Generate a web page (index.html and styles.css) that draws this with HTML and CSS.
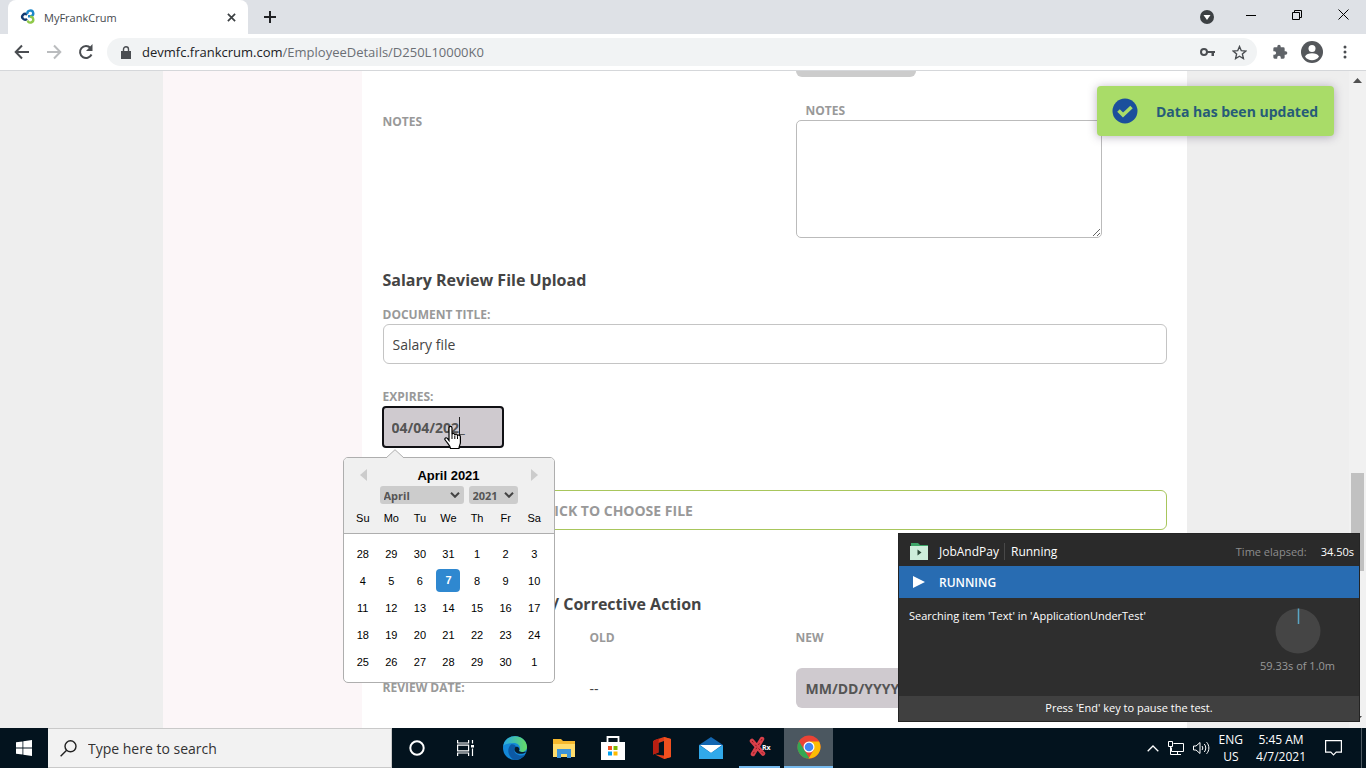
FILE: index.html
```html
<!DOCTYPE html>
<html lang="en">
<head>
<meta charset="utf-8">
<title>MyFrankCrum</title>
<link rel="stylesheet" href="styles.css">
</head>
<body>
<div class="screen">
  <header class="tabstrip">
    <div class="tab">
      <svg class="favicon" width="16" height="16" viewBox="0 0 16 16" fill="none" stroke-width="2.4"><path d="M7 5.800A2.800 2.800 0 1 0 7 9.800" stroke="#123a72"/><path d="M7.500 5A2.900 2.900 0 1 1 11 7.200H8" stroke="#1d87c9"/><path d="M10 7.800A2.900 2.900 0 1 1 7.600 11.500" stroke="#8fc94a"/></svg>
      <span class="tab-title">MyFrankCrum</span>
      <button class="icon-btn" aria-label="Close tab"><svg width="9" height="9" viewBox="0 0 10 10" stroke="#3c4043" stroke-width="1.900"><path d="M1 1l8 8M9 1l-8 8"/></svg></button>
    </div>
    <button class="icon-btn new-tab" aria-label="New tab"><svg width="12" height="12" viewBox="0 0 12 12" stroke="#202124" stroke-width="2"><path d="M6 0v12M0 6h12"/></svg></button>
    <button class="icon-btn update" aria-label="Search tabs"><svg width="14" height="14" viewBox="0 0 14 14"><circle cx="7" cy="7" r="7" fill="#3c4043"/><path d="M3.500 5h7L7 10z" fill="#fff"/></svg></button>
    <div class="window-controls">
      <button class="icon-btn" aria-label="Minimize"><svg width="10" height="10" viewBox="0 0 10 10" stroke="#000"><path d="M0 5.500h10"/></svg></button>
      <button class="icon-btn" aria-label="Restore"><svg width="10" height="10" viewBox="0 0 10 10" stroke="#000" fill="none"><path d="M.5 2.500h7v7h-7zM2.500 2.500v-2h7v7h-2"/></svg></button>
      <button class="icon-btn" aria-label="Close"><svg width="11" height="11" viewBox="0 0 11 11" stroke="#000"><path d="M.5.5l10 10M10.500.5l-10 10"/></svg></button>
    </div>
  </header>
  <nav class="toolbar">
    <button class="icon-btn nav-btn" aria-label="Back"><svg width="16" height="16" viewBox="0 0 16 16" fill="none" stroke="#4a4d51" stroke-width="2"><path d="M15 8H2M8 1.500L1.700 8 8 14.500"/></svg></button>
    <button class="icon-btn nav-btn" aria-label="Forward"><svg width="16" height="16" viewBox="0 0 16 16" fill="none" stroke="#babcbe" stroke-width="2"><path d="M1 8h13M8 1.500L14.300 8 8 14.500"/></svg></button>
    <button class="icon-btn nav-btn" aria-label="Reload"><svg width="16" height="16" viewBox="0 0 16 16" fill="none" stroke="#4a4d51" stroke-width="2"><path d="M13.500 10.500A6 6 0 1 1 12.500 4"/><path d="M14.500 0v7H8z" fill="#4a4d51" stroke="none"/></svg></button>
    <div class="omnibox">
      <svg width="10" height="13" viewBox="0 0 10 13"><path d="M0 5h10v8H0z" fill="#4a4d51"/><path d="M2.500 5V3.300a2.500 2.500 0 0 1 5 0V5" fill="none" stroke="#4a4d51" stroke-width="1.400"/></svg>
      <span class="url">devmfc.frankcrum.com<span class="path">/EmployeeDetails/D250L10000K0</span></span>
      <button class="icon-btn" aria-label="Passwords"><svg width="15" height="10" viewBox="0 0 15 10"><circle cx="4" cy="5" r="3" fill="none" stroke="#4a4d51" stroke-width="2"/><path d="M7 4h8v2h-1v3h-2.500V6H7z" fill="#4a4d51"/></svg></button>
      <button class="icon-btn" aria-label="Bookmark"><svg width="15" height="15" viewBox="0 0 15 15" fill="none" stroke="#4a4d51" stroke-width="1.400"><path d="M7.500 1.500l1.800 4.200 4.500.4-3.400 3 1 4.400-3.900-2.300-3.900 2.300 1-4.400-3.400-3 4.500-.4z"/></svg></button>
    </div>
    <button class="icon-btn ext" aria-label="Extensions"><svg width="16" height="16" viewBox="0 0 24 24" fill="#5f6368"><path d="M20.500 11H19V7a2 2 0 0 0-2-2h-4V3.500a2.500 2.500 0 0 0-5 0V5H4a2 2 0 0 0-2 2v3.800h1.500a2.700 2.700 0 0 1 0 5.400H2V20a2 2 0 0 0 2 2h3.800v-1.500a2.700 2.700 0 0 1 5.400 0V22H17a2 2 0 0 0 2-2v-4h1.500a2.500 2.500 0 0 0 0-5z"/></svg></button>
    <button class="icon-btn profile" aria-label="Profile"><svg width="22" height="22" viewBox="0 0 22 22"><circle cx="11" cy="11" r="11" fill="#54575b"/><circle cx="11" cy="7.500" r="3.500" fill="#fff"/><path d="M4 15.500c2-4.400 12-4.400 14 0-3 5-11 5-14 0z" fill="#fff"/></svg></button>
    <button class="icon-btn menu" aria-label="Menu"><svg width="4" height="14" viewBox="0 0 4 14" fill="#4a4d51"><circle cx="2" cy="2" r="1.500"/><circle cx="2" cy="7" r="1.500"/><circle cx="2" cy="12" r="1.500"/></svg></button>
  </nav>

  <div class="viewport">
    <div class="page">
      <div class="container">
        <aside class="sidebar"></aside>
        <main class="content">
          <div class="columns"><div class="date-stub"></div></div>
          <div class="columns notes-row">
            <span class="label notes-name">NOTES</span>
            <div class="notes-field">
              <label class="label notes-label" for="notes">NOTES</label>
              <textarea class="notes" id="notes"></textarea>
            </div>
          </div>
          <h2 class="heading">Salary Review File Upload</h2>
          <div class="field">
            <label class="label" for="doc">DOCUMENT TITLE:</label>
            <input class="text-input" id="doc" type="text" value="Salary file">
          </div>
          <div class="field expires">
            <label class="label" for="expires">EXPIRES:</label>
            <div class="date-wrap">
              <input class="date-input focused" id="expires" type="text" value="04/04/202_">
              <span class="caret"></span>
              <svg class="pointer" width="18" height="25" viewBox="0 0 18 25"><path d="M5 15.500V3c0-2.300 3-2.300 3 0v6.500c.4-1.500 2.700-1.300 2.800.4.5-1.200 2.600-1 2.700.7.600-1 2.900-.7 2.900 1.200v5.700c0 2-1.400 3-1.400 6H6.500c0-2.500-2.300-4.200-5.300-8.500-1-1.800.8-3 2.200-1.600z" fill="#fff" stroke="#000" stroke-width="1.200"/><path d="M8 9.500V14M10.800 10.500V14M13.500 11.500V14" stroke="#000"/></svg>
              <section class="calendar" aria-label="Choose date">
                <svg class="calendar-tip" width="18" height="9" viewBox="0 0 18 9"><path d="M0 9L9 .7 18 9" fill="#f0f0f0" stroke="#aeaeae"/></svg>
                <div class="calendar-head">
                  <div class="month-row">
                    <button class="icon-btn" aria-label="Previous month"><svg width="8" height="12" viewBox="0 0 8 12"><path d="M8 0v12L1 6z" fill="#ccc"/></svg></button>
                    <span class="month">April 2021</span>
                    <button class="icon-btn" aria-label="Next month"><svg width="8" height="12" viewBox="0 0 8 12"><path d="M0 0v12l7-6z" fill="#ccc"/></svg></button>
                  </div>
                  <div class="select-row">
                    <div class="select-wrap month-select"><select aria-label="Month"><option>April</option></select><svg width="10" height="6" viewBox="0 0 10 6" fill="none" stroke="#444" stroke-width="2"><path d="M1 .8l4 4 4-4"/></svg></div>
                    <div class="select-wrap year-select"><select aria-label="Year"><option>2021</option></select><svg width="10" height="6" viewBox="0 0 10 6" fill="none" stroke="#444" stroke-width="2"><path d="M1 .8l4 4 4-4"/></svg></div>
                  </div>
                  <div class="weekdays"><span>Su</span><span>Mo</span><span>Tu</span><span>We</span><span>Th</span><span>Fr</span><span>Sa</span></div>
                </div>
                <div class="calendar-body">
                  <table class="days">
                    <tr><td>28</td><td>29</td><td>30</td><td>31</td><td>1</td><td>2</td><td>3</td></tr>
                    <tr><td>4</td><td>5</td><td>6</td><td><span class="today">7</span></td><td>8</td><td>9</td><td>10</td></tr>
                    <tr><td>11</td><td>12</td><td>13</td><td>14</td><td>15</td><td>16</td><td>17</td></tr>
                    <tr><td>18</td><td>19</td><td>20</td><td>21</td><td>22</td><td>23</td><td>24</td></tr>
                    <tr><td>25</td><td>26</td><td>27</td><td>28</td><td>29</td><td>30</td><td>1</td></tr>
                  </table>
                </div>
              </section>
            </div>
          </div>
          <button class="choose-file">CLICK TO CHOOSE FILE</button>
          <h2 class="heading review-heading">/ Corrective Action</h2>
          <div class="columns names-row"><span class="label old-name">OLD</span><span class="label">NEW</span></div>
          <div class="columns review-row">
            <label class="label" for="review">REVIEW DATE:</label>
            <span class="old-value">--</span>
            <input class="date-input" id="review" type="text" placeholder="MM/DD/YYYY">
          </div>
        </main>
      </div>
      <div class="toast" role="status">
        <svg width="26" height="26" viewBox="0 0 26 26"><circle cx="13" cy="13" r="12.500" fill="#1b4f9c"/><path d="M6.500 12.500l4.500 4.500L19.500 9" fill="none" stroke="#a9dc68" stroke-width="3.600"/></svg>
        <span>Data has been updated</span>
      </div>
    </div>
    <div class="scrollbar">
      <svg width="9" height="5" viewBox="0 0 9 5"><path d="M0 5l4.500-5L9 5z" fill="#505050"/></svg>
      <div class="thumb"></div>
      <svg width="9" height="5" viewBox="0 0 9 5"><path d="M0 0l4.500 5L9 0z" fill="#505050"/></svg>
    </div>
  </div>

  <footer class="taskbar">
    <button class="task start" aria-label="Start"><svg width="16" height="16" viewBox="0 0 16 16" fill="#fff"><path d="M0 2.300L6.500 1.400v6.200H0zM7.300 1.300L16 0v7.600H7.300zM0 8.400h6.500v6.200L0 13.700zM7.300 8.400H16V16l-8.700-1.300z"/></svg></button>
    <label class="search">
      <svg width="17" height="17" viewBox="0 0 17 17" fill="none" stroke="#222" stroke-width="1.400"><circle cx="10.500" cy="6.300" r="5.500"/><path d="M6.600 10.200L.6 16.300"/></svg>
      <input type="text" placeholder="Type here to search">
    </label>
    <button class="task" aria-label="Cortana"><svg width="16" height="16" viewBox="0 0 16 16"><circle cx="8" cy="8" r="6.700" fill="none" stroke="#fff" stroke-width="2"/></svg></button>
    <button class="task" aria-label="Task view"><svg width="17" height="16" viewBox="0 0 17 16" fill="none" stroke="#fff" stroke-width="1.200"><path d="M.6 0v3h11V0M.6 16v-3h11V16M.6 5.100h11v5.800H.6zM15.500 0v3.500M15.500 8.500V16"/><path d="M14 5h3v2.500h-3z" fill="#fff" stroke="none"/></svg></button>
    <button class="task" aria-label="Edge"><svg width="24" height="24" viewBox="0 0 24 24"><defs><linearGradient id="edge-top" x1="0" x2="1"><stop offset="0" stop-color="#26a8e7"/><stop offset="1" stop-color="#66dc63"/></linearGradient></defs><circle cx="12" cy="12" r="12" fill="#1388d8"/><path d="M.2 10C2-3 23-3 24 11c0 5-6 6-8 4 3-4-1-8-5-8C6 7 2 8 .2 10z" fill="url(#edge-top)"/><path d="M8 8.500C4 12 4 20 11 24c5 0 9-2 11.300-5.500-5 2.500-11 0-11-4.500 0-2 1-2.800 1.700-3.500-1-1.500-3-2.500-5-2z" fill="#0c59a4"/><path d="M12.500 11c-2 2-.8 5.500 2.500 6.500 3 1 6-.2 8-1.300 1-1.200-4 1-7-1.200 1.200-2-.5-5-3.500-4z" fill="#071b2b"/></svg></button>
    <button class="task" aria-label="File Explorer"><svg width="22" height="19" viewBox="0 0 22 19"><path d="M0 0h8l2 2h12v16H0z" fill="#f5b82e"/><path d="M0 5h22v13H0z" fill="#ffdc6b"/><path d="M4 10h14v9h-4v-4H8v4H4z" fill="#3d94d9"/></svg></button>
    <button class="task" aria-label="Microsoft Store"><svg width="24" height="24" viewBox="0 0 24 24"><path d="M6.500 7V1h11v6" fill="none" stroke="#fff" stroke-width="1.800"/><path d="M0 6h24v18H0z" fill="#fff"/><path d="M7 10h4v4H7z" fill="#f15022"/><path d="M12.500 10h4v4h-4z" fill="#7fba00"/><path d="M7 15.500h4v4H7z" fill="#00a1f1"/><path d="M12.500 15.500h4v4h-4z" fill="#fb0"/></svg></button>
    <button class="task" aria-label="Office"><svg width="20" height="22" viewBox="0 0 20 22"><path d="M12 0l7 2v18l-7 2-9-4.500 9 1V4L6.500 6v9.500L1 17.500V6c0-2 .7-2.500 2-3z" fill="#e03c18"/><path d="M12 0l7 2v18l-7 2z" fill="#f0501f"/><path d="M3 3l4-1.500-.5 4.500v9.500L1 17.500V6c0-2 .7-2.500 2-3z" fill="#b81f12"/></svg></button>
    <button class="task" aria-label="Mail"><svg width="24" height="22" viewBox="0 0 24 22"><path d="M0 8l12-8 12 8v14H0z" fill="#1366b1"/><path d="M1 8h22l-11 8z" fill="#fff"/><path d="M0 8l12 8 12-8v14H0z" fill="#31a9ea"/></svg></button>
    <button class="task running" aria-label="Test runner"><svg width="24" height="24" viewBox="0 0 24 24"><path d="M4 6l11 12.500M14 4L5 19" stroke="#d8404a" stroke-width="4.500" stroke-linecap="round"/><path d="M4 6l11 12.500M14 4L5 19" stroke="#8b151c" stroke-width="1" stroke-dasharray="2 3"/><text x="14" y="15" class="rx">Rx</text></svg></button>
    <button class="task active" aria-label="Chrome"><svg width="24" height="24" viewBox="0 0 24 24"><circle cx="12" cy="12" r="11.500" fill="#ea4335"/><path d="M2 6.200l5.400 9 5.100 8.300A11.500 11.500 0 0 1 2 6.200z" fill="#34a853"/><path d="M12 6.500h10.100A11.500 11.500 0 0 1 11.500 23.500l5.300-8.800z" fill="#fbbc05"/><circle cx="12" cy="12" r="5.500" fill="#fff"/><circle cx="12" cy="12" r="4.300" fill="#4285f4"/></svg></button>
    <div class="tray">
      <svg width="12" height="7" viewBox="0 0 12 7" fill="none" stroke="#fff" stroke-width="1.300"><path d="M.7 6.300L6 1l5.300 5.300"/></svg>
      <svg width="16" height="15" viewBox="0 0 16 15" fill="none" stroke="#fff"><path d="M5.500 2.500h10v8h-12v-4M.5.5h4v5h-4zM2.500 5.500v8H6M9.500 10.500v3M6 13.500h7"/></svg>
      <svg width="17" height="14" viewBox="0 0 17 14" fill="none" stroke="#fff"><path d="M.5 5H3l4-3.500v11L3 9H.5zM9 5c1 1.200 1 2.800 0 4M11.300 3c2 2.300 2 5.700 0 8M13.600 1.200c3 3.300 3 8.300 0 11.600"/></svg>
      <div class="tray-text lang"><span>ENG</span><span>US</span></div>
      <div class="tray-text clock"><span>5:45 AM</span><span>4/7/2021</span></div>
      <svg class="notice" width="17" height="16" viewBox="0 0 17 16" fill="none" stroke="#fff" stroke-width="1.200"><path d="M.6.6h15.800v11.600h-5.200l-2.700 2.700-2.700-2.700H.6z"/></svg>
    </div>
    <div class="show-desktop"></div>
  </footer>

  <section class="runner" aria-label="Test progress">
    <div class="runner-title">
      <svg width="18" height="17" viewBox="0 0 18 17"><path d="M1 0h7l2 2h8v4H1z" fill="#3da568"/><path d="M0 3h18v14H0z" fill="#cdeedb"/><path d="M7.500 6.500v6l4-3z" fill="#2c4b3a"/></svg>
      <span class="runner-name">JobAndPay</span>
      <span class="runner-state">Running</span>
      <span class="elapsed">Time elapsed:</span>
      <span class="seconds">34.50s</span>
    </div>
    <div class="runner-status"><svg width="12" height="12" viewBox="0 0 12 12"><path d="M0 0v12l12-6z" fill="#fff"/></svg><span>RUNNING</span></div>
    <div class="runner-body">
      <span>Searching item 'Text' in 'ApplicationUnderTest'</span>
      <div class="timer">
        <svg width="46" height="46" viewBox="0 0 46 46"><circle cx="23" cy="23" r="22.500" fill="#454545"/><path d="M23.500 16V.5" stroke="#5aa5c4" stroke-width="1.500"/></svg>
        <span>59.33s of 1.0m</span>
      </div>
    </div>
    <div class="runner-foot">Press 'End' key to pause the test.</div>
  </section>
</div>
</body>
</html>
```
FILE: styles.css
```css
* { box-sizing: border-box; }
body { margin: 0; font-family: "Open Sans", "Noto Sans", sans-serif; color: #444; }
button, input, select, textarea { font-family: inherit; }
svg { flex: none; display: block; }
.screen { display: flex; flex-direction: column; height: 100vh; overflow: hidden; position: relative; }
.icon-btn { border: 0; background: none; padding: 0; display: flex; align-items: center; justify-content: center; }

.tabstrip { display: flex; align-items: center; height: 34px; background: #dee1e6; flex: none; }
.tab { display: flex; align-items: center; align-self: stretch; width: 240px; margin-left: 8px; padding: 0 12px; background: #fff; border-radius: 8px 8px 0 0; }
.tab-title { flex: 1; margin-left: 8px; font: 11px "Open Sans", sans-serif; color: #45494d; }
.new-tab { margin-left: 16px; }
.update { margin-left: auto; }
.window-controls { display: flex; align-self: flex-start; height: 29px; margin-left: 14px; }
.window-controls .icon-btn { width: 46px; }

.toolbar { display: flex; align-items: center; height: 37px; background: #fff; border-bottom: 1px solid #d5d7da; flex: none; padding-left: 6px; }
.nav-btn { width: 32px; }
.omnibox { flex: 1; display: flex; align-items: center; height: 28px; margin-left: 5px; padding: 0 10px 0 14px; border-radius: 14px; background: #f1f3f4; gap: 17px; }
.url { flex: 1; margin-left: -6px; font-size: 13px; color: #202124; }
.path { color: #6b6f74; }
.ext { margin-left: 15px; }
.profile { margin-left: 13px; }
.menu { margin: 0 19px 0 20px; }

.viewport { display: flex; flex: 1; min-height: 0; }
.page { flex: 1; position: relative; overflow: hidden; background: #eee; }
.container { display: flex; max-width: 1024px; height: 100%; margin: 0 auto; }
.sidebar { width: 199px; flex: none; background: #fcf6f8; }
.content { flex: 1; background: #fff; padding: 0 20px 0 21px; }
.columns { display: grid; grid-template-columns: 207px 206px 1fr; }
.date-stub { grid-column: 3; width: 120px; height: 6px; background: #ccc; border-radius: 0 0 6px 6px; }
.label { display: block; font-size: 12px; font-weight: 700; line-height: 18px; color: #999; }
.notes-row { padding-top: 25px; }
.notes-name { padding-top: 11px; }
.notes-field { grid-column: 3; }
.notes-label { margin-left: 10px; }
.notes { display: block; width: 306px; height: 118px; border: 1px solid #bbb; border-radius: 5px; background: #fff; }
.heading { margin: 30px 0 14px; font-size: 16px; line-height: 24px; font-weight: 700; color: #444; }
.text-input { display: block; width: 100%; height: 40px; border: 1px solid #c4c4c4; border-radius: 6px; padding: 0 9px; font-size: 14px; color: #444; }
.expires { margin-top: 24px; }
.date-wrap { position: relative; width: 122px; margin-left: -1px; }
.date-input { display: block; width: 122px; height: 40px; border: 0; border-radius: 6px; padding: 0 10px; background: #cfcacf; font-size: 14px; font-weight: 700; color: #555; }
.date-input::placeholder { color: #555; opacity: 1; }
.focused { height: 42px; border: 2px solid #101014; border-radius: 4px; padding: 0 8px; }
.caret { position: absolute; left: 77px; top: 11px; width: 1px; height: 18px; background: #222; }
.pointer { position: absolute; left: 62px; top: 19px; z-index: 3; }
.choose-file { display: block; width: 100%; height: 40px; margin-top: 42px; padding: 0 0 0 154px; border: 1px solid #a8c65c; border-radius: 6px; background: #fff; text-align: left; font-size: 14px; font-weight: 700; color: #999; }
.review-heading { margin: 62px 0 13px; padding-left: 170px; }
.old-name { grid-column: 2; }
.review-row { align-items: center; margin-top: 21px; }
.old-value { font-size: 14px; }

.calendar { position: absolute; left: -39px; top: 51px; z-index: 2; width: 212px; border: 1px solid #aeaeae; border-radius: 5px; background: #fff; font: 11px "Liberation Sans", Arial, sans-serif; color: #000; }
.calendar-tip { position: absolute; left: 42px; top: -9px; }
.calendar-head { background: #f0f0f0; border-bottom: 1px solid #aeaeae; border-radius: 4px 4px 0 0; padding: 8px 5px 7px; }
.month-row { display: flex; justify-content: space-between; align-items: center; padding: 0 10px; height: 18px; }
.month { font-size: 13px; font-weight: 700; }
.select-row { display: flex; justify-content: center; gap: 5px; height: 18px; margin-top: 2px; }
.select-wrap { display: flex; align-items: center; position: relative; }
.select-wrap svg { position: absolute; right: 4px; pointer-events: none; }
.select-wrap select { appearance: none; width: 100%; height: 18px; border: 0; border-radius: 3px; background: #ccc; padding: 0 4px; font: 700 11px "Open Sans", sans-serif; color: #555; }
.month-select { width: 84px; }
.year-select { width: 49px; }
.weekdays { display: grid; grid-template-columns: repeat(7, 1fr); text-align: center; line-height: 16px; margin-top: 6px; }
.calendar-body { padding: 6px 5px 7px; }
.days { width: 100%; table-layout: fixed; border-collapse: collapse; text-align: center; }
.days td { height: 27px; padding: 0; }
.today { display: block; width: 24px; margin: 0 auto; line-height: 23px; border-radius: 4px; background: #2f88d0; color: #fff; font-weight: 700; }

.toast { position: absolute; top: 15px; right: 15px; width: 237px; height: 50px; display: flex; align-items: center; padding: 0 15px; gap: 18px; border-radius: 4px; background: #a9dc68; box-shadow: 0 1px 10px rgba(60, 40, 80, .35); font-size: 14px; font-weight: 700; color: #265b78; white-space: nowrap; }
.scrollbar { width: 17px; flex: none; display: flex; flex-direction: column; align-items: center; justify-content: space-between; padding: 7px 0; background: #f1f1f1; }
.thumb { width: 13px; height: 98px; margin-top: 245px; background: #c1c1c1; }

.runner { position: absolute; right: 6px; bottom: 46px; z-index: 5; width: 462px; font-size: 11px; color: #fff; background: #2e2e2e; border: 1px solid #242424; }
.runner-title { display: flex; align-items: center; height: 32px; padding: 2px 5px 0 11px; background: #2a2a2a; }
.runner-name { margin-left: 11px; padding-right: 5px; border-right: 1px solid #484848; font-size: 12px; }
.runner-state { flex: 1; padding-left: 6px; font-size: 12px; }
.elapsed { color: #8d8d8d; margin-right: 14px; }
.runner-status { display: flex; align-items: center; height: 32px; padding-left: 14px; gap: 14px; background: #286cb2; font-size: 12px; font-weight: 600; }
.runner-body { display: flex; justify-content: space-between; height: 98px; padding: 10px 24px 0 10px; }
.timer { display: flex; flex-direction: column; align-items: center; gap: 4px; color: #999; }
.runner-foot { height: 25px; line-height: 24px; background: #404040; text-align: center; }

.taskbar { display: flex; height: 40px; flex: none; background: #03131e; }
.task { display: flex; align-items: center; justify-content: center; width: 49px; padding: 0; border: 0; background: none; }
.start { width: 48px; }
.search { display: flex; align-items: center; width: 344px; padding-left: 12px; gap: 11px; background: #f2f2f2; border: 1px solid #c9c9c9; border-left: 0; }
.search input { flex: 1; border: 0; padding: 0; background: none; font-size: 14px; }
.search input::placeholder { color: #333; opacity: 1; }
.running { width: 41px; margin: 0 4px; border-bottom: 2px solid #76b9ed; }
.active { background: #4b5760; border-bottom: 2px solid #76b9ed; }
.rx { font: 700 7px "Open Sans", sans-serif; fill: #fff; }
.tray { display: flex; align-items: center; margin-left: auto; padding-right: 19px; gap: 9px; color: #fff; }
.tray-text { display: flex; flex-direction: column; align-items: center; font-size: 12px; line-height: 17px; }
.clock { margin-left: 4px; }
.notice { margin-left: 10px; }
.show-desktop { width: 5px; border-left: 1px solid #4d5962; }
```
